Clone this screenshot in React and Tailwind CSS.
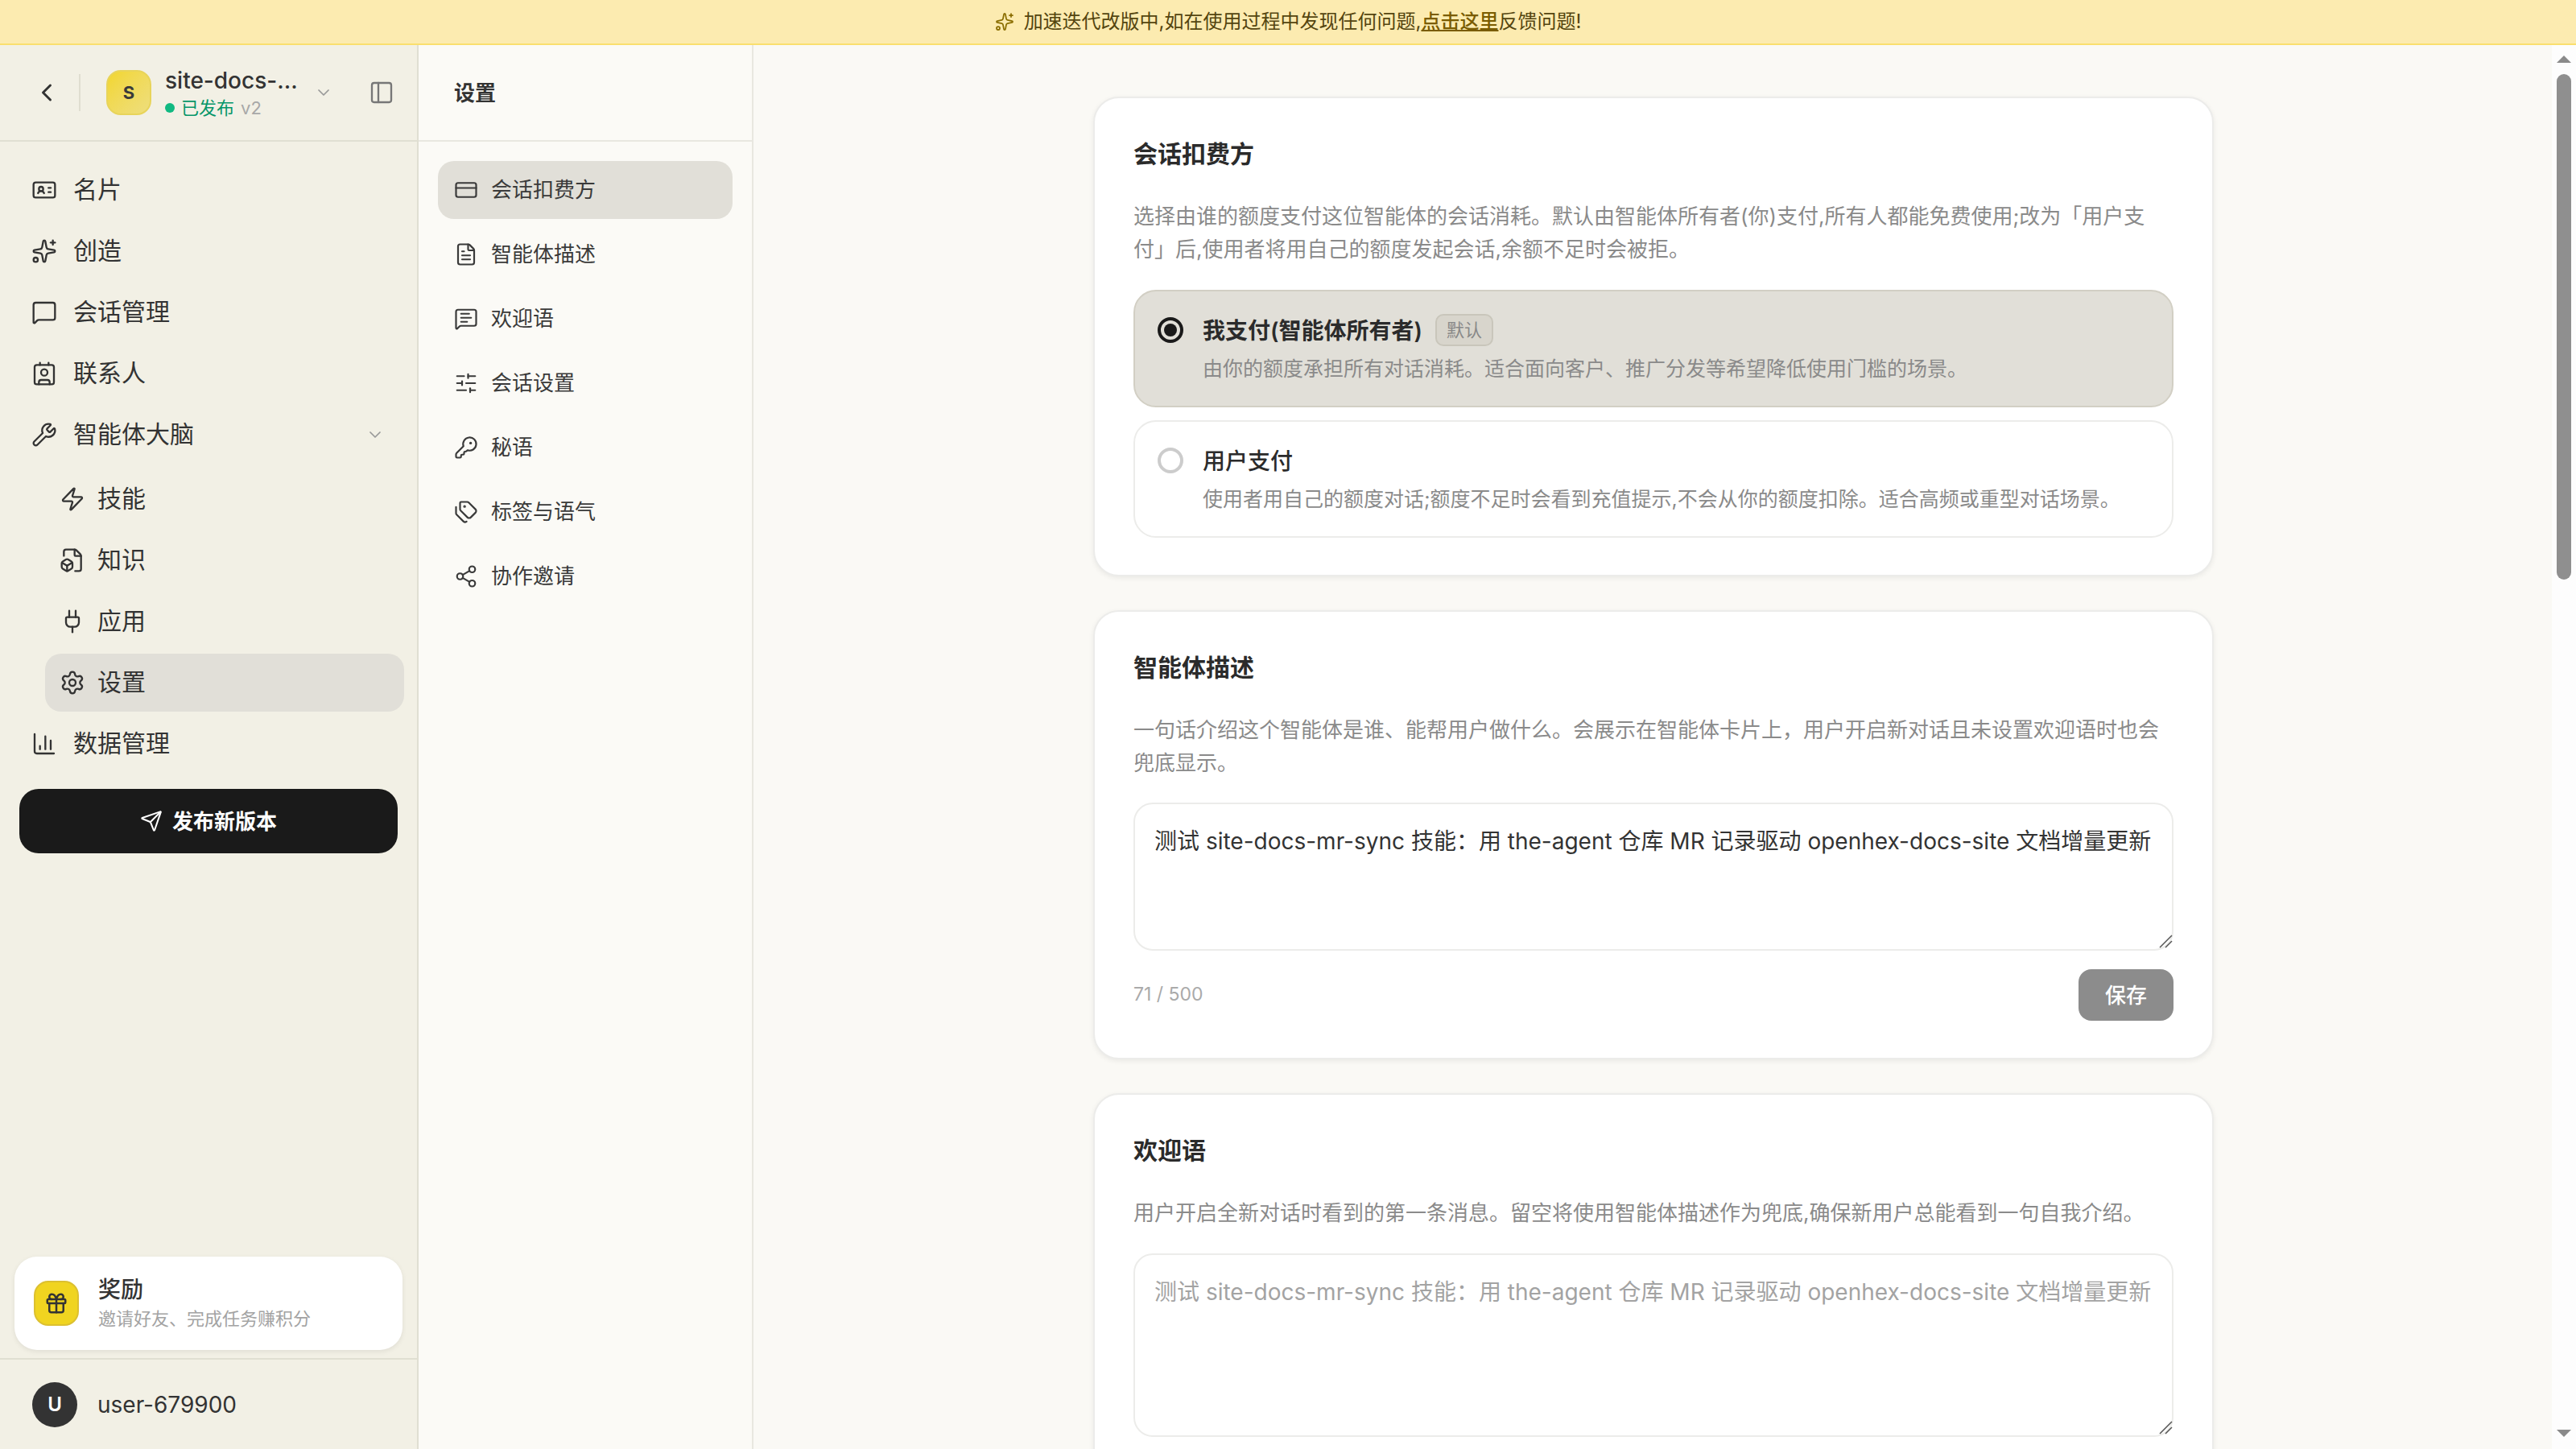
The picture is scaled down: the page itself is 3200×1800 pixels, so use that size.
import {
  ChartColumn,
  ChevronDown,
  ChevronLeft,
  Contact,
  CreditCard,
  FileBox,
  FileText,
  Gift,
  IdCard,
  KeyRound,
  MessageSquare,
  MessageSquareText,
  PanelLeft,
  Plug,
  Send,
  Settings,
  Share2,
  SlidersHorizontal,
  Sparkles,
  Tags,
  Wrench,
  Zap,
} from "lucide-react";

const DESC_TEXT = "测试 site-docs-mr-sync 技能：用 the-agent 仓库 MR 记录驱动 openhex-docs-site 文档增量更新";

const settingsNav = [
  { label: "会话扣费方", icon: CreditCard, active: true },
  { label: "智能体描述", icon: FileText },
  { label: "欢迎语", icon: MessageSquareText },
  { label: "会话设置", icon: SlidersHorizontal },
  { label: "秘语", icon: KeyRound },
  { label: "标签与语气", icon: Tags },
  { label: "协作邀请", icon: Share2 },
];

function NavItem({ icon: Icon, label, sub, active, children }) {
  return (
    <div
      className={`flex h-[72px] items-center rounded-[20px] text-[30px] leading-[40px] text-[#333] ${
        sub ? "ml-[32px] gap-[15px] pl-[18px]" : "gap-[20px] pl-[15px]"
      } ${active ? "bg-[#e1dfd8]" : ""}`}
    >
      <Icon size={32} strokeWidth={1.75} className="shrink-0" />
      <span className="-mt-[2px]">{label}</span>
      {children}
    </div>
  );
}

function Sidebar() {
  return (
    <aside className="flex w-[520px] shrink-0 flex-col border-r-2 border-[#e0dfd2] bg-[#f2f0e5]">
      <div className="flex h-[120px] shrink-0 items-center border-b-2 border-[#e0dfd2] pl-[40px]">
        <ChevronLeft size={36} strokeWidth={2} className="text-[#333]" />
        <div className="ml-[22px] h-[46px] w-[2px] bg-[#dfddd0]" />
        <div className="ml-[32px] flex h-[56px] w-[56px] items-center justify-center rounded-[18px] border-2 border-[#e8d45a] bg-gradient-to-br from-[#f2d62a] to-[#eede7c] text-[22px] font-bold text-[#3a3a3a]">
          S
        </div>
        <div className="ml-[17px] w-[180px] pt-[2px]">
          <div className="text-[28px] leading-[36px] font-medium text-[#333]">site-docs-...</div>
          <div className="flex items-center text-[22px] leading-[32px]">
            <span className="h-[12px] w-[12px] rounded-full bg-[#10b981]" />
            <span className="ml-[8px] text-[#059669]">已发布</span>
            <span className="ml-[8px] text-[#a8a8a8]">v2</span>
          </div>
        </div>
        <ChevronDown size={24} strokeWidth={1.75} className="ml-[5px] text-[#999]" />
        <PanelLeft size={32} strokeWidth={1.75} className="ml-[44px] text-[#777]" />
      </div>

      <nav className="flex flex-col gap-[4px] pt-[24px] pr-[16px] pl-[24px]">
        <NavItem icon={IdCard} label="名片" />
        <NavItem icon={Sparkles} label="创造" />
        <NavItem icon={MessageSquare} label="会话管理" />
        <NavItem icon={Contact} label="联系人" />
        <NavItem icon={Wrench} label="智能体大脑">
          <ChevronDown size={24} strokeWidth={1.75} className="mr-[24px] ml-auto text-[#999]" />
        </NavItem>
        <div className="mt-[4px] flex flex-col gap-[4px]">
          <NavItem sub icon={Zap} label="技能" />
          <NavItem sub icon={FileBox} label="知识" />
          <NavItem sub icon={Plug} label="应用" />
          <NavItem sub active icon={Settings} label="设置" />
        </div>
        <NavItem icon={ChartColumn} label="数据管理" />
      </nav>

      <div className="mt-[20px] mr-[24px] ml-[24px] flex h-[80px] shrink-0 items-center justify-center gap-[12px] rounded-[24px] bg-[#1a1a1a] text-[26px] font-semibold text-white">
        <Send size={28} strokeWidth={1.75} />
        发布新版本
      </div>

      <div className="flex-1" />

      <div className="mr-[18px] ml-[18px] flex h-[116px] shrink-0 items-center rounded-[28px] bg-white pl-[24px] shadow-[0_2px_6px_rgba(0,0,0,0.08)]">
        <div className="flex h-[56px] w-[56px] items-center justify-center rounded-[18px] border-2 border-[#dcc030] bg-[#f0d420] text-[#333]">
          <Gift size={30} strokeWidth={2} />
        </div>
        <div className="ml-[24px]">
          <div className="text-[28px] leading-[36px] font-medium text-[#333]">奖励</div>
          <div className="mt-[2px] text-[22px] leading-[32px] text-[#a3a3a3]">邀请好友、完成任务赚积分</div>
        </div>
      </div>

      <div className="mt-[10px] flex h-[113px] shrink-0 items-center border-t-2 border-[#e0dfd2] pl-[40px]">
        <div className="flex h-[56px] w-[56px] items-center justify-center rounded-full bg-[#333] text-[24px] font-semibold text-white">
          U
        </div>
        <span className="ml-[25px] text-[28px] text-[#333]">user-679900</span>
      </div>
    </aside>
  );
}

function SettingsNav() {
  return (
    <aside className="flex w-[416px] shrink-0 flex-col border-r-2 border-[#e8e7e0] bg-[#fbfaf6]">
      <div className="flex h-[120px] shrink-0 items-center border-b-2 border-[#e8e7e0] pl-[44px] text-[26px] font-semibold text-[#333]">
        设置
      </div>
      <div className="flex flex-col gap-[8px] pt-[24px] pr-[24px] pl-[24px]">
        {settingsNav.map(({ label, icon: Icon, active }) => (
          <div
            key={label}
            className={`flex h-[72px] items-center gap-[16px] rounded-[20px] pl-[20px] text-[26px] text-[#3a3a3a] ${
              active ? "bg-[#e1dfd8]" : ""
            }`}
          >
            <Icon size={30} strokeWidth={1.75} className="shrink-0" />
            <span className="-mt-[2px]">{label}</span>
          </div>
        ))}
      </div>
    </aside>
  );
}

function Card({ title, desc, children }) {
  return (
    <section className="w-[1392px] shrink-0 rounded-[32px] border-2 border-[#ececea] bg-white px-[48px] pt-[47px] pb-[46px] shadow-[0_2px_6px_rgba(0,0,0,0.07)]">
      <h2 className="text-[30px] leading-[44px] font-semibold text-[#2b2b2b]">{title}</h2>
      <p className="mt-[35px] text-[26px] leading-[41px] text-[#8a8a8a]">{desc}</p>
      {children}
    </section>
  );
}

function PayOption({ selected, title, badge, desc }) {
  return (
    <div
      className={`flex h-[146px] items-start rounded-[28px] border-2 pt-[28px] pl-[28px] ${
        selected ? "border-[#d2cfc4] bg-[#e1dfd8]" : "border-[#ececea] bg-white"
      }`}
    >
      <div
        className={`mt-[4px] flex h-[32px] w-[32px] shrink-0 items-center justify-center rounded-full border-[4px] ${
          selected ? "border-[#1a1a1a]" : "border-[#cccccc]"
        }`}
      >
        {selected && <div className="h-[16px] w-[16px] rounded-full bg-[#1a1a1a]" />}
      </div>
      <div className="ml-[24px]">
        <div className="flex h-[40px] items-center gap-[16px]">
          <span className={`mt-[2px] text-[28px] text-[#2b2b2b] ${selected ? "font-semibold" : "font-medium"}`}>
            {title}
          </span>
          {badge && (
            <span className="rounded-[10px] border-2 border-[#c9c6bb] bg-[#d8d5cc] px-[12px] py-[2px] text-[22px] leading-[32px] text-[#888]">
              {badge}
            </span>
          )}
        </div>
        <div className="mt-[10px] text-[25px] leading-[36px] text-[#8a8a8a]">{desc}</div>
      </div>
    </div>
  );
}

function TextBox({ height, value, placeholder }) {
  return (
    <div className={`relative ${height}`}>
      <textarea
        readOnly
        value={value}
        placeholder={placeholder}
        className="block h-full w-full resize-none rounded-[24px] border-2 border-[#ececea] bg-white px-[24px] py-[26px] text-[28px] leading-[40px] text-[#333] outline-none placeholder:text-[#a3a3a3]"
      />
      <svg width="18" height="18" viewBox="0 0 18 18" className="pointer-events-none absolute right-[1px] bottom-[3px]">
        <path d="M2 17 L17 2 M9 17 L17 9" stroke="#555" strokeWidth="1.5" fill="none" />
      </svg>
    </div>
  );
}

function Scrollbar() {
  return (
    <div className="flex w-[30px] shrink-0 flex-col items-center bg-[#fdfdfd] pt-[13px] pb-[15px]">
      <svg width="18" height="9" viewBox="0 0 18 9" className="shrink-0">
        <path d="M0 9 L9 0 L18 9 Z" fill="#8a8a8a" />
      </svg>
      <div className="mt-[14px] h-[628px] w-[18px] shrink-0 rounded-full bg-[#8f8f8f]" />
      <div className="flex-1" />
      <svg width="18" height="9" viewBox="0 0 18 9" className="shrink-0">
        <path d="M0 0 L18 0 L9 9 Z" fill="#8a8a8a" />
      </svg>
    </div>
  );
}

export default function App() {
  return (
    <div className="flex h-screen flex-col overflow-hidden font-['Inter','Noto_Sans_CJK_SC',sans-serif]">
      <div className="flex h-[56px] shrink-0 items-center justify-center gap-[12px] border-b-2 border-[#fadf6e] bg-[#fcebb0] text-[24px] text-[#54450f]">
        <Sparkles size={24} strokeWidth={1.75} className="text-[#8a6d00]" />
        <span>
          加速迭代改版中,如在使用过程中发现任何问题,
          <span className="font-medium text-[#7a5c00] underline">点击这里</span>
          反馈问题!
        </span>
      </div>

      <div className="flex min-h-0 flex-1">
        <Sidebar />
        <SettingsNav />
        <main className="flex min-w-0 flex-1 flex-col items-center gap-[42px] overflow-hidden bg-[#faf9f5] pt-[64px] pl-[2px]">
          <Card
            title="会话扣费方"
            desc="选择由谁的额度支付这位智能体的会话消耗。默认由智能体所有者(你)支付,所有人都能免费使用;改为「用户支付」后,使用者将用自己的额度发起会话,余额不足时会被拒。"
          >
            <div className="mt-[30px] flex flex-col gap-[16px]">
              <PayOption
                selected
                title="我支付(智能体所有者)"
                badge="默认"
                desc="由你的额度承担所有对话消耗。适合面向客户、推广分发等希望降低使用门槛的场景。"
              />
              <PayOption
                title="用户支付"
                desc="使用者用自己的额度对话;额度不足时会看到充值提示,不会从你的额度扣除。适合高频或重型对话场景。"
              />
            </div>
          </Card>

          <Card
            title="智能体描述"
            desc="一句话介绍这个智能体是谁、能帮用户做什么。会展示在智能体卡片上，用户开启新对话且未设置欢迎语时也会兜底显示。"
          >
            <div className="mt-[29px]">
              <TextBox height="h-[184px]" value={DESC_TEXT} />
            </div>
            <div className="mt-[23px] flex items-center justify-between">
              <span className="-mt-[2px] text-[23px] text-[#aaa]">71 / 500</span>
              <button type="button" className="h-[64px] w-[118px] rounded-[16px] bg-[#8c8c8c] text-[26px] font-medium text-white">
                保存
              </button>
            </div>
          </Card>

          <Card
            title="欢迎语"
            desc="用户开启全新对话时看到的第一条消息。留空将使用智能体描述作为兜底,确保新用户总能看到一句自我介绍。"
          >
            <div className="mt-[30px]">
              <TextBox height="h-[228px]" placeholder={DESC_TEXT} />
            </div>
          </Card>
        </main>
        <Scrollbar />
      </div>
    </div>
  );
}
